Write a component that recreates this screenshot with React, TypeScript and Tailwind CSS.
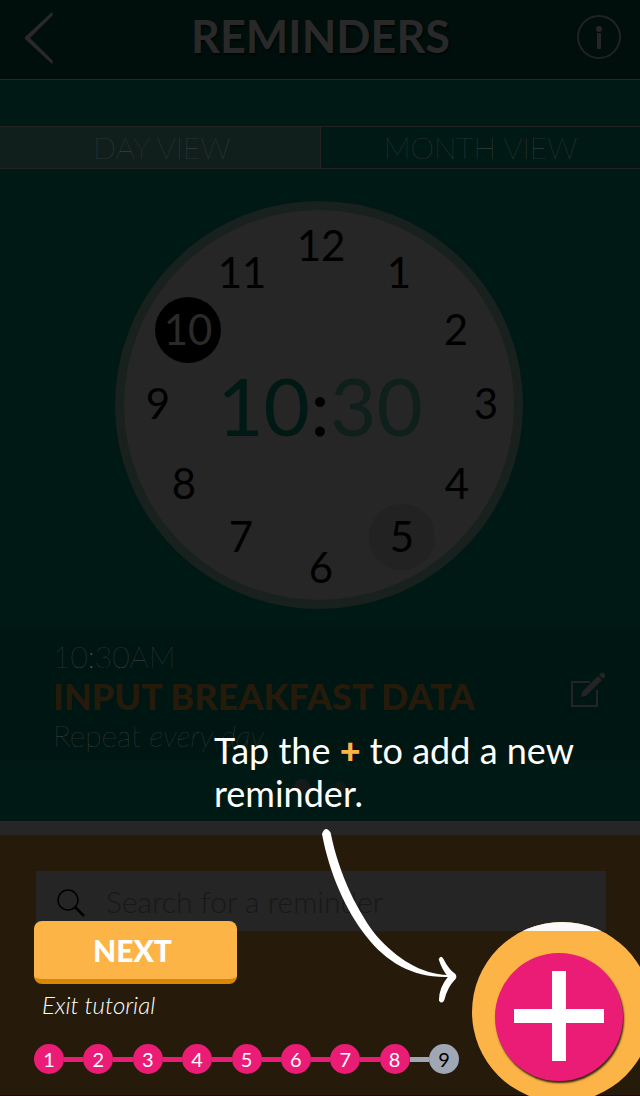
import { Fragment } from 'react'

type Hour = { label: string; x: number; y: number; tone?: 'active' | 'soft' }

const DIAL = 408

const hours: Hour[] = [
  { label: '12', x: 206, y: 45 },
  { label: '1', x: 284, y: 72 },
  { label: '2', x: 341, y: 129 },
  { label: '3', x: 371, y: 203 },
  { label: '4', x: 342, y: 283 },
  { label: '5', x: 287, y: 336, tone: 'soft' },
  { label: '6', x: 206, y: 367 },
  { label: '7', x: 126, y: 336 },
  { label: '8', x: 69, y: 283 },
  { label: '9', x: 43, y: 203 },
  { label: '10', x: 73, y: 129, tone: 'active' },
  { label: '11', x: 127, y: 72 },
]

function hourTone(tone?: 'active' | 'soft') {
  if (tone === 'active') return 'bg-black text-[#2a2a2a]'
  if (tone === 'soft') return 'bg-[#222222] text-black'
  return 'text-black'
}

function Header() {
  return (
    <header className="grid h-20 grid-cols-[1fr_auto_1fr] items-center border-b border-[#2a2824] bg-[#000f0c] pr-[19px] pl-6">
      <button type="button" aria-label="Back" className="justify-self-start pb-1">
        <svg width="30" height="52" viewBox="0 0 30 52" className="block fill-[#2a2829]">
          <path d="M28 0 L29 3 L6 26 L29 49 L28 52 L1 27 Q0 26 1 25 Z" />
        </svg>
      </button>
      <h1 className="pr-1 pb-1.5 text-[45px] leading-none font-bold text-[#292929] [text-shadow:1px_2px_2px_#00000099]">
        REMINDERS
      </h1>
      <button type="button" aria-label="Information" className="justify-self-end pb-[5px]">
        <svg width="44" height="44" viewBox="0 0 44 44" className="block">
          <circle cx="22" cy="22" r="21" fill="none" stroke="#222222" strokeWidth="2" />
          <circle cx="22" cy="14" r="3" fill="#262626" />
          <rect x="20" y="18" width="4" height="16" rx="1" fill="#262626" />
        </svg>
      </button>
    </header>
  )
}

function Tabs() {
  return (
    <div
      role="tablist"
      className="mt-[46px] grid h-[43px] grid-cols-2 border-y border-[#242523] text-[30px] leading-none font-thin text-[#4c4c4c]"
    >
      <button type="button" role="tab" aria-selected="true" className="bg-[#101e1c] pb-0.5 pl-1">
        DAY VIEW
      </button>
      <button type="button" role="tab" aria-selected="false" className="border-l border-[#242523] pb-0.5">
        MONTH VIEW
      </button>
    </div>
  )
}

function Clock() {
  return (
    <div className="mt-8 flex justify-center pr-0.5">
      <div className="relative flex size-[408px] items-center justify-center rounded-full border-[9px] border-[#18211d] bg-[#262626]">
        <p className="pl-0.5 text-[80px] leading-none text-black">
          <span className="text-[#001914]">10</span>:<span className="text-[#0f1f1b]">30</span>
        </p>
        <div className="absolute -inset-[9px]">
          {hours.map((h) => (
            <button
              key={h.label}
              type="button"
              className={`absolute flex size-[66px] -translate-x-1/2 -translate-y-1/2 items-center justify-center rounded-full pb-0.5 text-[42px] leading-none ${hourTone(h.tone)}`}
              style={{ left: `${(h.x / DIAL) * 100}%`, top: `${(h.y / DIAL) * 100}%` }}
            >
              {h.label}
            </button>
          ))}
        </div>
      </div>
    </div>
  )
}

function EditIcon() {
  return (
    <svg width="36" height="36" viewBox="0 0 36 36" className="block">
      <path d="M20 10 H2 V34 H27 V18" fill="none" stroke="#242424" strokeWidth="2" />
      <path d="M11 25 L12 20 L28 4 L32 8 L16 24 Z" fill="#242424" />
      <path d="M29 3 L31 1 Q32 0 34 1 L35 3 Q36 4 35 5 L33 7 Z" fill="#242424" />
    </svg>
  )
}

function Reminder() {
  return (
    <section className="mt-5 flex h-[131px] items-center justify-between bg-[#001612] pr-[34px] pl-[53px] text-[30px] font-thin text-[#4c4c4c]">
      <div>
        <p className="leading-[40px]">10:30AM</p>
        <h2 className="text-[36px] leading-[40px] font-black text-[#261a0b]">INPUT BREAKFAST DATA</h2>
        <p className="leading-[38px]">
          Repeat <em>every day</em>
        </p>
      </div>
      <button type="button" aria-label="Edit reminder" className="pb-2.5">
        <EditIcon />
      </button>
    </section>
  )
}

function Search() {
  return (
    <section className="flex-1 border-t-[14px] border-b border-t-[#262626] border-b-[#230612] bg-[#261a0b] px-[34px] pt-9 pl-9">
      <div className="flex h-[60px] items-center bg-[#252525] pl-5">
        <svg width="30" height="30" viewBox="0 0 30 30" fill="none" stroke="#000000" className="mt-1 block shrink-0">
          <circle cx="12" cy="12" r="10" strokeWidth="1.5" />
          <path d="M19 19 L28 28" strokeWidth="2.5" />
        </svg>
        <input
          type="search"
          aria-label="Search reminders"
          placeholder="Search for a reminder"
          className="ml-5 h-full min-w-0 flex-1 bg-transparent text-[30px] font-light text-[#181818] outline-none placeholder:text-[#181818]"
        />
      </div>
    </section>
  )
}

function Steps() {
  const steps = [1, 2, 3, 4, 5, 6, 7, 8, 9]
  return (
    <ol className="mt-6 flex w-[425px] items-center text-[20px] leading-none text-white">
      {steps.map((n) => (
        <Fragment key={n}>
          {n > 1 && <li aria-hidden="true" className={`h-[5px] flex-1 ${n === 9 ? 'bg-[#9fa6b4]' : 'bg-[#eb1c75]'}`} />}
          <li
            className={`flex size-[30px] items-center justify-center rounded-full ${n === 9 ? 'bg-[#9fa6b4] text-black' : 'bg-[#eb1c75]'}`}
          >
            {n}
          </li>
        </Fragment>
      ))}
    </ol>
  )
}

function Tutorial() {
  return (
    <>
      <p className="absolute top-[729px] left-[214px] w-[380px] text-[36px] leading-[43px] text-white">
        Tap the <span className="font-black text-[#fdb447]">+</span> to add a new reminder.
      </p>
      <svg width="140" height="178" viewBox="30 48 420 534" className="absolute top-[826px] left-[320px]">
        <path
          d="M36 72 C58 190 108 302 168 378 C230 458 310 504 415 501 L415 495 C330 492 262 446 200 378 C148 312 88 200 62 68 Q46 44 36 72 Z"
          fill="#ffffff"
        />
        <path
          d="M386 448 Q392 434 400 446 Q416 478 436 492 Q442 500 436 508 Q412 532 403 570 Q396 584 387 572 Q386 534 414 500 Q396 480 386 448 Z"
          fill="#ffffff"
        />
      </svg>
      <div className="absolute top-[921px] left-[34px] flex flex-col items-start">
        <button
          type="button"
          className="h-[63px] w-[203px] rounded-lg border-b-[5px] border-[#d98709] bg-[#fdb447] pr-1.5 text-[30px] leading-none font-black text-white"
        >
          NEXT
        </button>
        <a href="#exit" className="mt-1.5 ml-2 text-[24px] leading-[30px] font-light text-white italic">
          Exit tutorial
        </a>
        <Steps />
      </div>
      <div className="absolute top-[922px] left-[472px] size-[180px] overflow-hidden rounded-full bg-[#fdb447]">
        <div className="h-[9px] bg-[#f9f9f9]" />
        <button
          type="button"
          aria-label="Add reminder"
          className="mt-[22px] ml-[23px] flex size-32 items-center justify-center rounded-full bg-[#eb1c75] pb-0.5 shadow-[1px_2px_2px_#000000cc]"
        >
          <svg width="90" height="90" viewBox="0 0 90 90" className="block fill-white">
            <path d="M38 0 H52 V38 H90 V52 H52 V90 H38 V52 H0 V38 H38 Z" />
          </svg>
        </button>
      </div>
    </>
  )
}

export default function App() {
  return (
    <main className="relative flex min-h-screen flex-col overflow-hidden bg-[#001914] font-['Lato',sans-serif]">
      <Header />
      <Tabs />
      <Clock />
      <Reminder />
      <div className="flex h-[61px] items-center justify-center gap-6 pb-2">
        <span className="size-4 rounded-full bg-[#161b1a]" />
        <span className="size-3 rounded-full bg-[#101a17]" />
      </div>
      <Search />
      <Tutorial />
    </main>
  )
}
